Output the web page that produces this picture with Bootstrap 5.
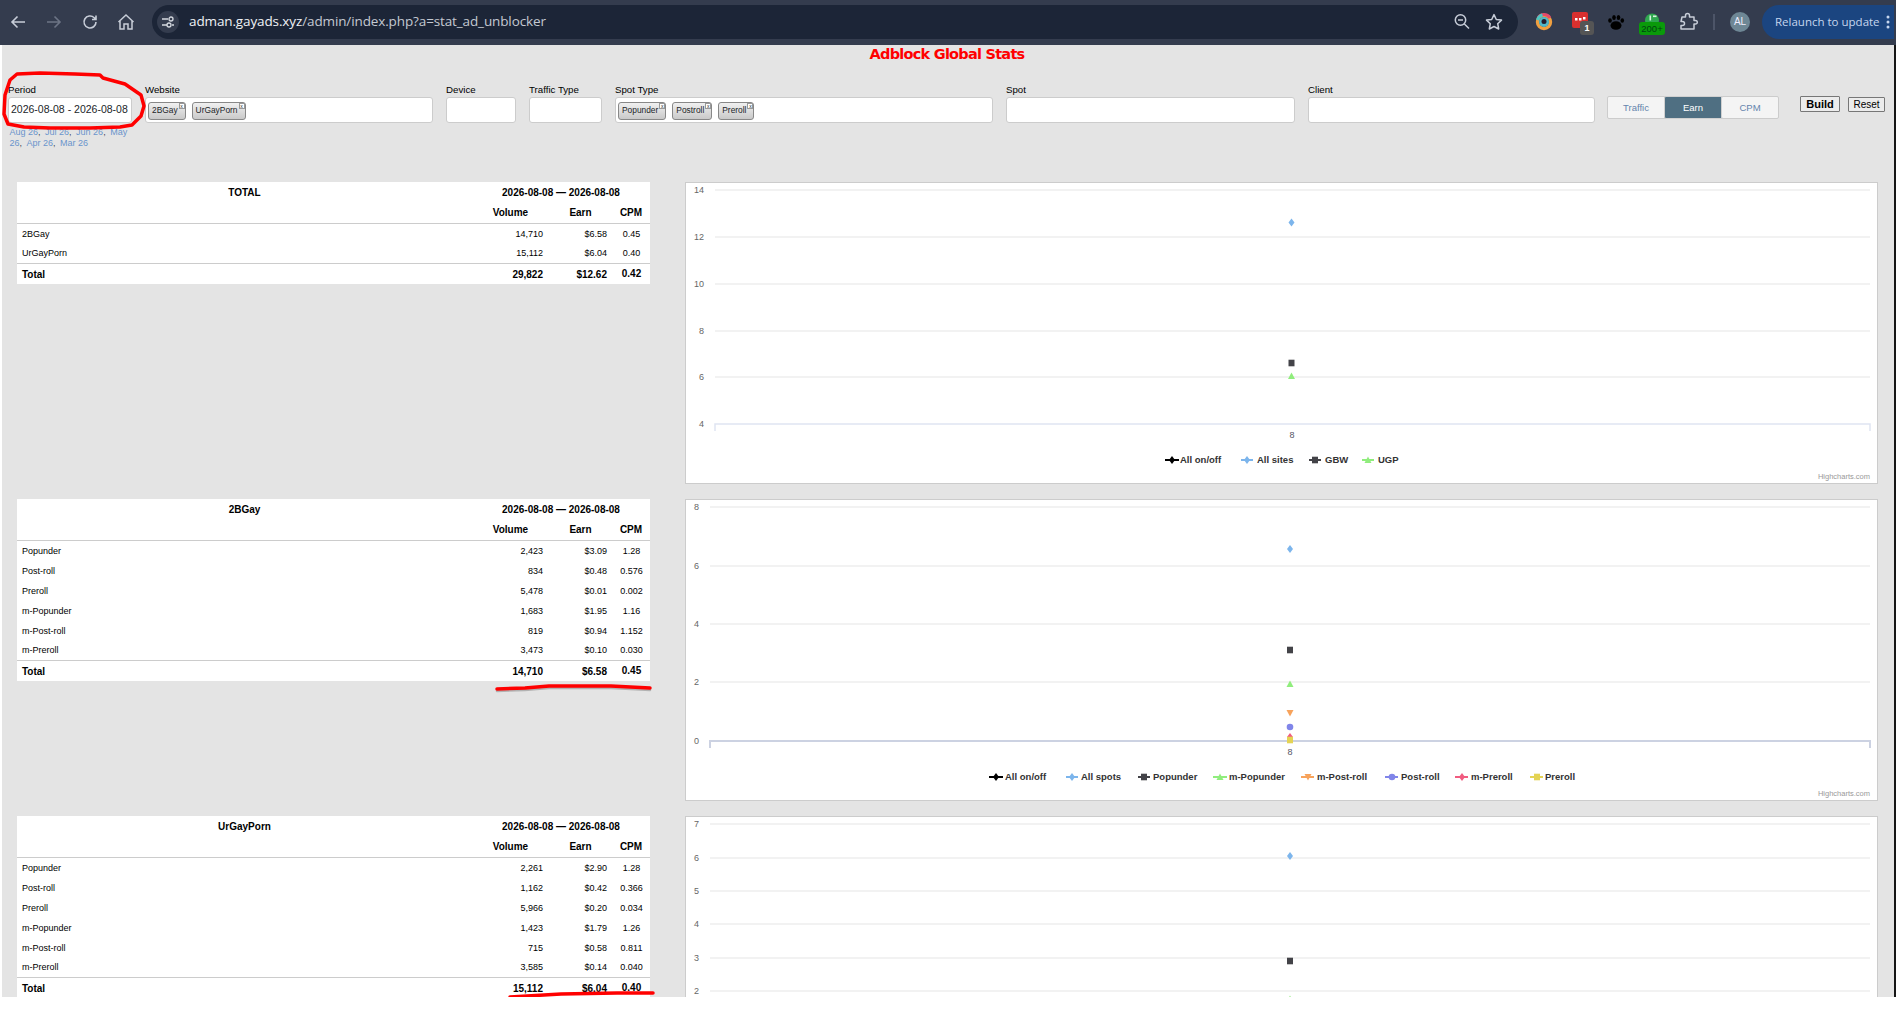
<!DOCTYPE html>
<html lang="en">
<head>
<meta charset="utf-8">
<title>Adblock Global Stats</title>
<link href="https://cdn.jsdelivr.net/npm/bootstrap@5.3.0/dist/css/bootstrap.min.css" rel="stylesheet">
<style>
html,body{height:1009px;overflow:hidden;background:#fff;margin:0}
body{font-family:"Liberation Sans",Arial,sans-serif;font-size:10px;color:#000;position:relative}
.browserbar{height:45px;background:#343c4e;color:#c7cdd8;overflow:hidden;padding-bottom:2px}
.navicons{width:152px;padding-left:8px;gap:16px;flex:none}
.navicons svg{width:20px;height:20px;flex:none}
.omni{width:1366px;height:34px;background:#1c2537;border-radius:17px;padding:0 6px 0 5px;flex:none}
.tunecirc{width:22px;height:22px;border-radius:50%;background:#343c4e;flex:none;margin-right:10px}
.urltext{font-family:"Open Sans","Liberation Sans",sans-serif;font-size:13.5px;color:#c4c9d2;letter-spacing:-.12px;white-space:nowrap}
.urltext b{font-weight:400;color:#f0f2f6}
.omniright{gap:12px;margin-right:8px}
.extslot{width:24px;height:24px;position:relative;flex:none;margin-left:12px}
.extslot.firstext{margin-left:14px}
.extbadge{position:absolute;border-radius:3px;font-family:"Liberation Sans",sans-serif;line-height:1;text-align:center}
.badge-one{right:-2px;bottom:-1px;width:14px;height:14px;background:#555;color:#fff;font-size:9px;font-weight:700;line-height:14px}
.badge-green{left:-1px;bottom:-1px;width:26px;height:13px;background:#0a9a0a;color:#041;font-size:9.5px;line-height:13px}
.barsep{width:2px;height:16px;background:#4d5568;margin:0 15px 0 13px;flex:none}
.avatarcirc{width:20px;height:20px;border-radius:50%;background:#6e8795;color:#eef;font-size:10px;line-height:20px;text-align:center;flex:none}
.relaunchpill{margin-left:12px;width:132px;height:34px;background:#1b4580;border-radius:17px 0 0 17px;color:#c6d6ee;font-family:"Open Sans","Liberation Sans",sans-serif;font-size:11.5px;padding-left:13px;white-space:nowrap;flex:none}
.pagebody{height:952px;margin-left:2px;background:#e4e4e4;border-right:2px solid #151515;overflow:hidden}
.pagetitle{margin:0;height:18px;line-height:18px;font-size:14.5px;font-weight:700;color:#f00;text-align:center;padding-right:2px;font-family:"DejaVu Sans",sans-serif;letter-spacing:-.75px}
.filterbar{height:119px;padding:20px 0 0 6px;gap:13px}
.fieldlabel{display:block;height:14px;line-height:13px;font-size:9.7px;margin:0;white-space:nowrap}
.fieldbox{height:26px;padding:4px 2px;border:1px solid #ccc;border-radius:3px;background:#fff;font-size:10.5px;box-shadow:none;min-height:0;gap:6px;white-space:nowrap}
.w-period{width:124px;flex:none}.w-site{width:288px}.w-dev{width:70px}.w-traf{width:73px}.w-stype{width:378px}.w-spot{width:289px}.w-client{width:287px}
.quicklinks{line-height:10.5px;font-size:9px;margin-top:4px;color:#445;padding-left:1.5px}
.quicklinks a{color:#6a94cc;text-decoration:none}
.quicklinks a+a{margin-left:2px}
.tagchip{position:relative;display:inline-block;height:18px;line-height:15px;padding:0 7px 0 3px;font-size:8.4px;border:1px solid #888;border-radius:3px;background:linear-gradient(#f0f0f0,#c9c9c9);white-space:nowrap}
.tagx{position:absolute;right:0;top:0;width:6px;height:6px;border:1px solid #999;background:#fff;font-size:5px;line-height:4px;text-align:center}
.segwrap{margin-top:13px;margin-left:-1px;flex:none}
.segwrap .btn,.segwrap .btn:not(:first-child){width:58px;height:23px;padding:0;font-size:9.5px;line-height:21px;border:1px solid #ccc;border-radius:2px;background:#f4f4f4;color:#6484ad;margin-left:0}
.segwrap .btn.active{background:#4f6f82;color:#fff;border-color:#d0d0d0}
.actbtn{height:16px;padding:0;margin-top:13px;border:1px solid #777;border-radius:1px;background:#ececec;color:#000;font-size:10.5px;line-height:13px;flex:none}
.act-build{width:40px;font-weight:700;margin-left:8px;font-size:11px}
.act-reset{width:37px;margin-left:-5px;height:15px;margin-top:14px;font-size:10px}
.statrow{padding-left:15px;gap:35px;margin-bottom:15px;height:302px}
.statgrid{width:633px;table-layout:fixed;background:#fff;--bs-table-bg:#fff;flex:none;font-size:9px;margin:0}
.statgrid th,.statgrid td{padding:1px 6px 0 5px;height:20px;line-height:12px;vertical-align:middle;border:0;font-weight:400;color:#000;background:#fff;box-shadow:none;white-space:nowrap}
.statgrid thead th{font-size:10px;font-weight:700;text-align:center}
.statgrid thead tr:last-child th{height:21px;border-bottom:1px solid #ccc}
.statgrid td.numcell{text-align:right}
.statgrid td.cpmcell{text-align:center;padding:1px 0 0}
.statgrid tfoot td{font-size:10px;font-weight:700;height:21px;border-top:1px solid #ccc;padding-top:2px}
.chartbox{width:1193px;height:302px;border:1px solid #ccc;background:#fff;flex:none;overflow:hidden}
.chartbox svg{display:block;width:1191px;height:300px;font-family:"Liberation Sans",sans-serif}
.gridl{stroke:#eeeeee;stroke-width:1.5}
.ylab{font-size:9px;fill:#666;text-anchor:end}
.xlab{font-size:9px;fill:#556;text-anchor:middle}
.leg{font-size:9.5px;font-weight:700;fill:#333}
.credit{font-size:7.5px;fill:#999;text-anchor:end}
.axl{fill:none;stroke:#dfe5f2;stroke-width:1.5}
.axl-dk{fill:none;stroke:#ccd2e2;stroke-width:2}
.inkmarks{position:absolute;left:0;top:0;width:1896px;height:997px;pointer-events:none}
.inkmarks path{fill:none;stroke:#f00;stroke-width:3.5;stroke-linejoin:round;stroke-linecap:round}
.inkmarks .inkshade{stroke:#000;stroke-opacity:.22;stroke-width:2.5}
</style>
</head>
<body>
<header class="browserbar d-flex align-items-center">
  <div class="navicons d-flex align-items-center">
    <svg viewBox="0 0 20 20" fill="none" stroke="#c7cdd8" stroke-width="1.6"><path d="M17 10H4M9.5 4.5 4 10l5.5 5.5"/></svg>
    <svg viewBox="0 0 20 20" fill="none" stroke="#6c7485" stroke-width="1.6"><path d="M3 10h13M10.5 4.5 16 10l-5.5 5.5"/></svg>
    <svg viewBox="0 0 20 20" fill="none" stroke="#c7cdd8" stroke-width="1.6"><path d="M16 10a6 6 0 1 1-1.8-4.3L16 7.5M16 3.5v4h-4"/></svg>
    <svg viewBox="0 0 20 20" fill="none" stroke="#c7cdd8" stroke-width="1.5"><path d="M4 9v8h4v-5h4v5h4V9M2.5 10 10 3l7.5 7"/></svg>
  </div>
  <div class="omni d-flex align-items-center justify-content-between">
    <div class="d-flex align-items-center">
      <span class="tunecirc d-flex align-items-center justify-content-center">
        <svg width="14" height="14" viewBox="0 0 14 14" fill="none" stroke="#d5d9e0" stroke-width="1.3"><path d="M1 4h6M11 10h2M1 10h5"/><circle cx="10" cy="4" r="2"/><circle cx="8" cy="10" r="2"/></svg>
      </span>
      <span class="urltext"><b>adman.gayads.xyz</b>/admin/index.php?a=stat_ad_unblocker</span>
    </div>
    <div class="omniright d-flex align-items-center">
      <svg width="20" height="20" viewBox="0 0 20 20" fill="none" stroke="#c7cdd8" stroke-width="1.5"><circle cx="8.5" cy="8" r="5.2"/><path d="M12.4 12 17 16.5M6 8h5"/></svg>
      <svg width="20" height="20" viewBox="0 0 20 20" fill="none" stroke="#c7cdd8" stroke-width="1.5" stroke-linejoin="round"><path d="m10 2.6 2.3 4.9 5.2.6-3.8 3.6 1 5.3L10 14.5 5.3 17l1-5.3L2.500 8.100l5.200-.6z"/></svg>
    </div>
  </div>
  <div class="extslot firstext">
    <svg width="24" height="24" viewBox="0 0 24 24"><circle cx="12" cy="12" r="6.500" fill="none" stroke="#f0a040" stroke-width="3.400"/><path d="M6 8a7 7 0 0 1 12 0" fill="none" stroke="#e24b6a" stroke-width="3"/><path d="M5.500 10a7 7 0 0 1 5-5" fill="none" stroke="#4ec7c4" stroke-width="3"/><circle cx="12" cy="12" r="5" fill="#4fb7c9"/><circle cx="12" cy="11.500" r="2.500" fill="#241c2c"/></svg>
  </div>
  <div class="extslot">
    <svg width="24" height="24" viewBox="0 0 24 24"><rect x="4" y="2" width="16" height="16" rx="2" fill="#d9302f"/><rect x="7" y="8" width="2.500" height="2.500" fill="#fff"/><rect x="11" y="8" width="2.500" height="2.500" fill="#fff"/><rect x="15" y="7" width="2.500" height="2.500" fill="#fff"/></svg>
    <span class="extbadge badge-one">1</span>
  </div>
  <div class="extslot">
    <svg width="24" height="24" viewBox="0 0 24 24" fill="#000"><ellipse cx="12" cy="15.500" rx="5.500" ry="4.300"/><ellipse cx="6" cy="10.500" rx="1.800" ry="2.300"/><ellipse cx="10" cy="7.500" rx="1.800" ry="2.500"/><ellipse cx="14.500" cy="7.500" rx="1.800" ry="2.500"/><ellipse cx="18.300" cy="10.500" rx="1.800" ry="2.300"/></svg>
  </div>
  <div class="extslot">
    <svg width="24" height="24" viewBox="0 0 24 24"><circle cx="12" cy="10.500" r="7" fill="#2fa84f"/><rect x="9.500" y="5.500" width="1.600" height="5" fill="#d7f2dd"/><rect x="13" y="5.500" width="3.500" height="1.600" fill="#d7f2dd"/></svg>
    <span class="extbadge badge-green">200+</span>
  </div>
  <div class="extslot">
    <svg width="24" height="24" viewBox="0 0 24 24" fill="none" stroke="#c7cdd8" stroke-width="1.500" stroke-linejoin="round"><path d="M6 7h3.500V5.500a2 2 0 0 1 4 0V7H18v3.500h1.500a1.800 1.800 0 0 1 0 3.600H18V19H5v-3.500h1.500a1.900 1.900 0 0 0 0-4H5z"/></svg>
  </div>
  <span class="barsep"></span>
  <span class="avatarcirc">AL</span>
  <div class="relaunchpill d-flex align-items-center justify-content-between">
    <span>Relaunch to update</span>
    <svg width="12" height="16" viewBox="0 0 12 16" fill="#c6d6ee"><circle cx="6" cy="3" r="1.500"/><circle cx="6" cy="8" r="1.500"/><circle cx="6" cy="13" r="1.500"/></svg>
  </div>
</header>

<main class="pagebody">
  <h1 class="pagetitle">Adblock Global Stats</h1>

  <form class="filterbar d-flex align-items-start">
    <div class="w-period">
      <label class="fieldlabel">Period</label>
      <div class="form-control fieldbox d-flex align-items-center">2026-08-08 - 2026-08-08</div>
      <div class="quicklinks"><a href="#">Aug 26</a>, <a href="#">Jul 26</a>, <a href="#">Jun 26</a>, <a href="#">May 26</a>, <a href="#">Apr 26</a>, <a href="#">Mar 26</a></div>
    </div>
    <div class="w-site">
      <label class="fieldlabel">Website</label>
      <div class="form-control fieldbox d-flex align-items-start">
        <span class="tagchip">2BGay<span class="tagx">x</span></span>
        <span class="tagchip">UrGayPorn<span class="tagx">x</span></span>
      </div>
    </div>
    <div class="w-dev">
      <label class="fieldlabel">Device</label>
      <div class="form-control fieldbox"></div>
    </div>
    <div class="w-traf">
      <label class="fieldlabel">Traffic Type</label>
      <div class="form-control fieldbox"></div>
    </div>
    <div class="w-stype">
      <label class="fieldlabel">Spot Type</label>
      <div class="form-control fieldbox d-flex align-items-start">
        <span class="tagchip">Popunder<span class="tagx">x</span></span>
        <span class="tagchip">Postroll<span class="tagx">x</span></span>
        <span class="tagchip">Preroll<span class="tagx">x</span></span>
      </div>
    </div>
    <div class="w-spot">
      <label class="fieldlabel">Spot</label>
      <div class="form-control fieldbox"></div>
    </div>
    <div class="w-client">
      <label class="fieldlabel">Client</label>
      <div class="form-control fieldbox"></div>
    </div>
    <div class="segwrap btn-group">
      <button type="button" class="btn">Traffic</button>
      <button type="button" class="btn active">Earn</button>
      <button type="button" class="btn">CPM</button>
    </div>
    <button type="button" class="btn actbtn act-build">Build</button>
    <button type="button" class="btn actbtn act-reset">Reset</button>
  </form>

  <section class="statrow d-flex align-items-start">
    <table class="table statgrid">
      <colgroup><col style="width:456px"><col style="width:76px"><col style="width:64px"><col style="width:37px"></colgroup>
      <thead>
        <tr><th>TOTAL</th><th colspan="3">2026-08-08 — 2026-08-08</th></tr>
        <tr><th></th><th>Volume</th><th>Earn</th><th>CPM</th></tr>
      </thead>
      <tbody>
        <tr><td>2BGay</td><td class="numcell">14,710</td><td class="numcell">$6.58</td><td class="cpmcell">0.45</td></tr>
        <tr><td>UrGayPorn</td><td class="numcell">15,112</td><td class="numcell">$6.04</td><td class="cpmcell">0.40</td></tr>
      </tbody>
      <tfoot><tr><td>Total</td><td class="numcell">29,822</td><td class="numcell">$12.62</td><td class="cpmcell">0.42</td></tr></tfoot>
    </table>
    <div class="chartbox">
      <svg viewBox="0 0 1191 300">
        <defs>
          <path id="mk-dia" d="M0-4 3-0 0 4-3 0z"/>
          <path id="mk-sq" d="M-3-3.300h6v6.600h-6z"/>
          <path id="mk-tri" d="M0-3.500 3.500 3h-7z"/>
          <path id="mk-inv" d="M0 3.500 3.500-3h-7z"/>
          <circle id="mk-cir" r="3.300"/>
        </defs>
        <path class="gridl" d="M29 7H1184M29 54H1184M29 101H1184M29 148H1184M29 194H1184"/>
        <path class="axl" d="M29 248V241H1184V248"/>
        <text class="ylab" x="18" y="10">14</text><text class="ylab" x="18" y="57">12</text><text class="ylab" x="18" y="104">10</text><text class="ylab" x="18" y="151">8</text><text class="ylab" x="18" y="197">6</text><text class="ylab" x="18" y="244">4</text>
        <text class="xlab" x="606" y="255">8</text>
        <use href="#mk-dia" x="605.500" y="39.500" fill="#7cb5ec"/>
        <use href="#mk-sq" x="605.500" y="180" fill="#434348"/>
        <use href="#mk-tri" x="605.500" y="193" fill="#90ed7d"/>
        <g><path d="M479 277h14" stroke="#000" stroke-width="2"/><use href="#mk-dia" x="486" y="277" fill="#000"/><text class="leg" x="494" y="280">All on/off</text></g>
        <g><path d="M555 277h12" stroke="#7cb5ec" stroke-width="2"/><use href="#mk-dia" x="561" y="277" fill="#7cb5ec"/><text class="leg" x="571" y="280">All sites</text></g>
        <g><path d="M623 277h12" stroke="#434348" stroke-width="2"/><use href="#mk-sq" x="629" y="277" fill="#434348"/><text class="leg" x="639" y="280">GBW</text></g>
        <g><path d="M676 277h12" stroke="#90ed7d" stroke-width="2"/><use href="#mk-tri" x="682" y="277" fill="#90ed7d"/><text class="leg" x="692" y="280">UGP</text></g>
        <text class="credit" x="1184" y="296">Highcharts.com</text>
      </svg>
    </div>
  </section>

  <section class="statrow d-flex align-items-start">
    <table class="table statgrid">
      <colgroup><col style="width:456px"><col style="width:76px"><col style="width:64px"><col style="width:37px"></colgroup>
      <thead>
        <tr><th>2BGay</th><th colspan="3">2026-08-08 — 2026-08-08</th></tr>
        <tr><th></th><th>Volume</th><th>Earn</th><th>CPM</th></tr>
      </thead>
      <tbody>
        <tr><td>Popunder</td><td class="numcell">2,423</td><td class="numcell">$3.09</td><td class="cpmcell">1.28</td></tr>
        <tr><td>Post-roll</td><td class="numcell">834</td><td class="numcell">$0.48</td><td class="cpmcell">0.576</td></tr>
        <tr><td>Preroll</td><td class="numcell">5,478</td><td class="numcell">$0.01</td><td class="cpmcell">0.002</td></tr>
        <tr><td>m-Popunder</td><td class="numcell">1,683</td><td class="numcell">$1.95</td><td class="cpmcell">1.16</td></tr>
        <tr><td>m-Post-roll</td><td class="numcell">819</td><td class="numcell">$0.94</td><td class="cpmcell">1.152</td></tr>
        <tr><td>m-Preroll</td><td class="numcell">3,473</td><td class="numcell">$0.10</td><td class="cpmcell">0.030</td></tr>
      </tbody>
      <tfoot><tr><td>Total</td><td class="numcell">14,710</td><td class="numcell">$6.58</td><td class="cpmcell">0.45</td></tr></tfoot>
    </table>
    <div class="chartbox">
      <svg viewBox="0 0 1191 300">
        <path class="gridl" d="M24 7H1184M24 66H1184M24 124H1184M24 182H1184"/>
        <path class="axl-dk" d="M24 248V241H1184V248"/>
        <text class="ylab" x="13" y="10">8</text><text class="ylab" x="13" y="69">6</text><text class="ylab" x="13" y="127">4</text><text class="ylab" x="13" y="185">2</text><text class="ylab" x="13" y="244">0</text>
        <text class="xlab" x="604" y="255">8</text>
        <use href="#mk-dia" x="604" y="49" fill="#7cb5ec"/>
        <use href="#mk-sq" x="604" y="150" fill="#434348"/>
        <use href="#mk-tri" x="604" y="184" fill="#90ed7d"/>
        <use href="#mk-inv" x="604" y="213" fill="#f7a35c"/>
        <use href="#mk-cir" x="604" y="227" fill="#8085e9"/>
        <use href="#mk-dia" x="604" y="237" fill="#f15c80"/>
        <use href="#mk-sq" x="604" y="240" fill="#e4d354"/>
        <g><path d="M303 277h14" stroke="#000" stroke-width="2"/><use href="#mk-dia" x="310" y="277" fill="#000"/><text class="leg" x="319" y="280">All on/off</text></g>
        <g><path d="M380 277h12" stroke="#7cb5ec" stroke-width="2"/><use href="#mk-dia" x="386" y="277" fill="#7cb5ec"/><text class="leg" x="395" y="280">All spots</text></g>
        <g><path d="M452 277h12" stroke="#434348" stroke-width="2"/><use href="#mk-sq" x="458" y="277" fill="#434348"/><text class="leg" x="467" y="280">Popunder</text></g>
        <g><path d="M527 277h14" stroke="#90ed7d" stroke-width="2"/><use href="#mk-tri" x="534" y="277" fill="#90ed7d"/><text class="leg" x="543" y="280">m-Popunder</text></g>
        <g><path d="M615 277h13" stroke="#f7a35c" stroke-width="2"/><use href="#mk-inv" x="622" y="277" fill="#f7a35c"/><text class="leg" x="631" y="280">m-Post-roll</text></g>
        <g><path d="M699 277h13" stroke="#8085e9" stroke-width="2"/><use href="#mk-cir" x="706" y="277" fill="#8085e9"/><text class="leg" x="715" y="280">Post-roll</text></g>
        <g><path d="M769 277h13" stroke="#f15c80" stroke-width="2"/><use href="#mk-dia" x="776" y="277" fill="#f15c80"/><text class="leg" x="785" y="280">m-Preroll</text></g>
        <g><path d="M844 277h13" stroke="#e4d354" stroke-width="2"/><use href="#mk-sq" x="851" y="277" fill="#e4d354"/><text class="leg" x="859" y="280">Preroll</text></g>
        <text class="credit" x="1184" y="296">Highcharts.com</text>
      </svg>
    </div>
  </section>

  <section class="statrow d-flex align-items-start">
    <table class="table statgrid">
      <colgroup><col style="width:456px"><col style="width:76px"><col style="width:64px"><col style="width:37px"></colgroup>
      <thead>
        <tr><th>UrGayPorn</th><th colspan="3">2026-08-08 — 2026-08-08</th></tr>
        <tr><th></th><th>Volume</th><th>Earn</th><th>CPM</th></tr>
      </thead>
      <tbody>
        <tr><td>Popunder</td><td class="numcell">2,261</td><td class="numcell">$2.90</td><td class="cpmcell">1.28</td></tr>
        <tr><td>Post-roll</td><td class="numcell">1,162</td><td class="numcell">$0.42</td><td class="cpmcell">0.366</td></tr>
        <tr><td>Preroll</td><td class="numcell">5,966</td><td class="numcell">$0.20</td><td class="cpmcell">0.034</td></tr>
        <tr><td>m-Popunder</td><td class="numcell">1,423</td><td class="numcell">$1.79</td><td class="cpmcell">1.26</td></tr>
        <tr><td>m-Post-roll</td><td class="numcell">715</td><td class="numcell">$0.58</td><td class="cpmcell">0.811</td></tr>
        <tr><td>m-Preroll</td><td class="numcell">3,585</td><td class="numcell">$0.14</td><td class="cpmcell">0.040</td></tr>
      </tbody>
      <tfoot><tr><td>Total</td><td class="numcell">15,112</td><td class="numcell">$6.04</td><td class="cpmcell">0.40</td></tr></tfoot>
    </table>
    <div class="chartbox">
      <svg viewBox="0 0 1191 300">
        <path class="gridl" d="M24 7H1184M24 41H1184M24 74H1184M24 107H1184M24 141H1184M24 174H1184"/>
        <text class="ylab" x="13" y="10">7</text><text class="ylab" x="13" y="44">6</text><text class="ylab" x="13" y="77">5</text><text class="ylab" x="13" y="110">4</text><text class="ylab" x="13" y="144">3</text><text class="ylab" x="13" y="177">2</text>
        <use href="#mk-dia" x="604" y="39" fill="#7cb5ec"/>
        <use href="#mk-sq" x="604" y="144" fill="#434348"/>
        <use href="#mk-tri" x="604" y="182" fill="#90ed7d"/>
      </svg>
    </div>
  </section>
</main>

<svg class="inkmarks" viewBox="0 0 1896 997">
  <path class="inkshade" d="M497 691 525 690 549 688 611 688 650 690"/>
  <path d="M10 80 17 74 40 73 75 74 100 75 103 78 125 84 141 95 144 106 141 116 132 125 120 127 90 128 50 128 24 127 8 124 4 114 5 95 10 80z"/>
  <path d="M497 689 525 688 549 686 611 686 650 688"/>
  <path d="M510 997 561 994 617 993 653 993"/>
</svg>
</body>
</html>
